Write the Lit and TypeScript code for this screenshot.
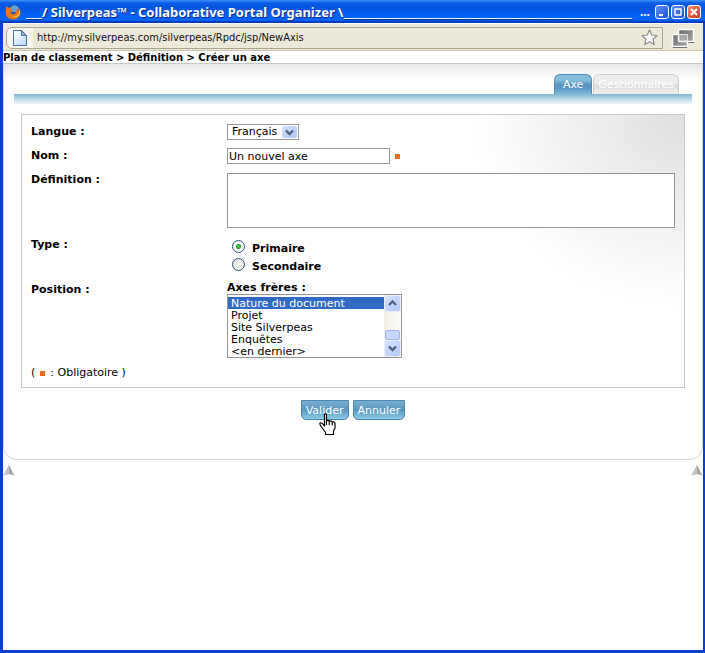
import { LitElement, html, css, svg } from "lit";
import { customElement, state } from "lit/decorators.js";

const chevronDown = svg`<path d="M1 1.5 L4.5 5 L8 1.5" fill="none" stroke="#4d6185" stroke-width="2.4"/>`;
const chevronUp = svg`<path d="M1 5 L4.5 1.5 L8 5" fill="none" stroke="#4d6185" stroke-width="2.4"/>`;

@customElement("title-bar")
class TitleBar extends LitElement {
  static styles = css`
    :host {
      display: flex;
      align-items: center;
      box-sizing: border-box;
      height: 23px;
      padding: 0 4px 0 5px;
      color: #fff;
      background: linear-gradient(#3b92fb 0, #0a5ce6 3px, #0254e0 8px, #0560f5 15px, #0466fc 20px, #0038b8 22px);
    }
    .title {
      flex: 1;
      min-width: 0;
      margin: 0 0 0 5px;
      overflow: hidden;
      white-space: nowrap;
      font: bold 13px/22px "Noto Sans", sans-serif;
      text-shadow: 1px 1px #0b2a86;
    }
    .dots {
      margin: 0 5px 0 4px;
      font: bold 12px/22px "Noto Sans", sans-serif;
    }
    .logo {
      flex: none;
    }
    .controls {
      display: flex;
      gap: 2px;
    }
    .control {
      display: grid;
      place-items: center;
      width: 14px;
      height: 14px;
      padding: 0;
      border: 1px solid #fff;
      border-radius: 3px;
      background: linear-gradient(135deg, #5c8df5, #1f50d8);
    }
    .close {
      background: linear-gradient(135deg, #f09070, #c83410);
    }
  `;

  render() {
    return html`
      <svg class="logo" width="16" height="16" viewBox="0 0 16 16" aria-hidden="true">
        <circle cx="8" cy="8" r="7" fill="#24549f" />
        <path d="M7 2 q4 -2 7 2 l-3 4 -4 0 -2 -3z" fill="#5fa4dc" />
        <path d="M1.5 2 L3.5 4 Q5 3 6.5 3.5 L5.5 5.5 L8 7 L5.5 8.5 Q6.5 11 9.5 10 Q12 8.5 11 5 Q13 6 13 8 Q14 6 13.3 3.3 Q16 6 15.5 9.5 Q14 15.5 8 15.5 Q2 15.3 0.7 9.5 Q0.3 5 1.5 2z" fill="#e8781c" />
        <path d="M13.8 5 Q15 8 13 10.8 Q10.5 13 7 12.2 Q12 15 14.5 11 Q16 8 13.8 5z" fill="#f9c347" />
      </svg>
      <h1 class="title">___/ Silverpeas™ - Collaborative Portal Organizer \\${"_".repeat(54)}</h1>
      <span class="dots">...</span>
      <div class="controls">
        <button class="control" aria-label="Réduire">
          <svg width="12" height="12"><path d="M3 9h4" stroke="#fff" stroke-width="2" /></svg>
        </button>
        <button class="control" aria-label="Agrandir">
          <svg width="12" height="12"><path d="M2.5 3h7M3 3v6M9 3v6M2.5 9h7" stroke="#fff" stroke-width="1.4" /></svg>
        </button>
        <button class="control close" aria-label="Fermer">
          <svg width="12" height="12"><path d="M3 3l6 6M9 3l-6 6" stroke="#fff" stroke-width="2" /></svg>
        </button>
      </div>
    `;
  }
}

@customElement("address-bar")
class AddressBar extends LitElement {
  static styles = css`
    :host {
      display: flex;
      align-items: center;
      gap: 8px;
      box-sizing: border-box;
      height: 28px;
      padding: 1px 8px 0 3px;
      background: #ece9d8;
      border-top: 1px solid #fff;
      border-bottom: 1px solid #c9c5b2;
    }
    .field {
      display: flex;
      flex: 1;
      align-items: center;
      box-sizing: border-box;
      height: 22px;
      padding-right: 4px;
      border: 1px solid #a7a491;
      border-radius: 6px 0 0 6px;
      overflow: hidden;
    }
    .page {
      display: grid;
      place-items: center;
      width: 26px;
      height: 20px;
      background: #f7f6f1;
    }
    .url {
      flex: 1;
      min-width: 0;
      height: 20px;
      padding: 0 0 0 4px;
      box-sizing: border-box;
      border: 0;
      outline: 0;
      background: none;
      color: #111;
      font: 11px/20px "DejaVu Sans Condensed", "DejaVu Sans", sans-serif;
    }
    .icon {
      flex: none;
    }
  `;

  render() {
    return html`
      <div class="field">
        <span class="page">
          <svg width="14" height="16" viewBox="0 0 14 16" aria-hidden="true">
            <defs>
              <linearGradient id="paper" x1="0" y1="0" x2="1" y2="1">
                <stop offset="0" stop-color="#fff" />
                <stop offset="1" stop-color="#b9d8fa" />
              </linearGradient>
            </defs>
            <path d="M.5 .5h8l5 5v10h-13z" fill="url(#paper)" stroke="#4d6fa6" />
            <path d="M8.5 .5v5h5z" fill="#86b6ee" stroke="#4d6fa6" />
          </svg>
        </span>
        <input class="url" aria-label="Adresse" value="http://my.silverpeas.com/silverpeas/Rpdc/jsp/NewAxis" />
        <svg class="icon" width="17" height="17" viewBox="0 0 17 17" aria-hidden="true">
          <path d="M8.5 1 L10.7 6 L16 6.5 L12 10.2 L13.2 15.6 L8.5 12.8 L3.8 15.6 L5 10.2 L1 6.5 L6.3 6z" fill="#fff" stroke="#8c8c8c" stroke-width="1.2" stroke-linejoin="round" />
        </svg>
      </div>
      <svg class="icon" width="24" height="20" viewBox="0 0 24 20" aria-hidden="true">
        <defs>
          <linearGradient id="pane" x1="0" y1="0" x2="1" y2="1">
            <stop offset="0" stop-color="#6c6c6c" />
            <stop offset="1" stop-color="#a8a8a8" />
          </linearGradient>
        </defs>
        <path d="M2 19.500h14" stroke="#444" />
        <path d="M16 14.500h7" stroke="#444" />
        <rect x="1.5" y="6.5" width="15" height="12" rx="1" fill="url(#pane)" stroke="#fff" stroke-width="1.5" />
        <rect x="7.5" y="1.5" width="15" height="12" rx="1" fill="url(#pane)" stroke="#fff" stroke-width="1.5" />
        <path d="M8 6.5h8.5v6.5h-8.5z" fill="#a9a9a9" stroke="#e4e4e4" />
      </svg>
    `;
  }
}

@customElement("app-root")
class AppRoot extends LitElement {
  static styles = css`
    :host {
      display: flex;
      flex-direction: column;
      box-sizing: border-box;
      min-height: 100vh;
      color: #000;
      background: #fff;
      border: solid #0a3fd0;
      border-width: 0 2px 3px 3px;
      font: 11px/14px "DejaVu Sans", sans-serif;
    }
    title-bar {
      margin: 0 -2px 0 -3px;
    }
    .crumbs {
      box-sizing: border-box;
      height: 13px;
      border-bottom: 1px solid #c8c8c8;
      font: bold 10px/14px "DejaVu Sans", sans-serif;
      white-space: nowrap;
    }
    .crumbs a {
      color: inherit;
      text-decoration: none;
    }
    .card {
      padding: 10px 10px 39px;
      border: solid #d9d9d9;
      border-width: 0 1px 1px;
      border-radius: 0 0 14px 14px;
      background: linear-gradient(#e6e6e6, #fff 14px);
    }
    .tabs {
      display: flex;
      justify-content: flex-end;
      gap: 1px;
      padding-right: 13px;
    }
    .tab {
      box-sizing: border-box;
      height: 20px;
      padding: 0 8px;
      border: 1px solid #5189b8;
      border-bottom: 0;
      border-radius: 6px 6px 0 0;
      background: linear-gradient(#86bdd9 0 5px, #7db4d4 6px, #5690c0 10px, #5f9bc6 14px, #7fbbd8);
      color: #fff;
      font: inherit;
      line-height: 20px;
    }
    .tab.idle {
      padding: 0 4px;
      border-color: #ccc;
      background: linear-gradient(#ececec 0 9px, #dadada 10px, #e8e8e8 15px, #ececec);
    }
    .band {
      height: 10px;
      background: linear-gradient(#7db4d0, #b9dcea 50%, #eef6fb);
    }
    .panel {
      display: grid;
      gap: 6px;
      margin: 10px 7px 12px;
      padding: 9px 9px 5px;
      border: 1px solid #c8c8c8;
      background: radial-gradient(ellipse 210px 190px at 100% 0, #e0e0e0, #efefef 50%, #fff) no-repeat;
    }
    .row {
      display: grid;
      grid-template-columns: 196px minmax(0, 1fr);
      align-items: start;
      min-height: 18px;
    }
    .name,
    .choice,
    .siblings-label {
      font-weight: bold;
    }
    .name {
      line-height: 16px;
    }
    .type {
      padding-top: 3px;
    }
    .field {
      display: flex;
      align-items: center;
      gap: 5px;
    }
    .dot {
      flex: none;
      width: 5px;
      height: 5px;
      margin-top: 1px;
      background: #ee6a1c;
    }
    .picker {
      display: inline-flex;
      align-items: center;
      box-sizing: border-box;
      width: 72px;
      height: 16px;
      border: 1px solid #949494;
      background: #fff;
    }
    .language {
      flex: 1;
      min-width: 0;
      margin: 0 -15px 0 0;
      height: 14px;
      padding: 0 0 0 4px;
      appearance: none;
      border: 0;
      outline: 0;
      background: none;
      color: #000;
      font: inherit;
      z-index: 1;
    }
    .arrow {
      display: grid;
      place-items: center;
      flex: none;
      box-sizing: border-box;
      width: 15px;
      height: 12px;
      margin-right: 1px;
      border-radius: 2px;
      background: linear-gradient(135deg, #d6e2fe, #adc4f8);
    }
    .text {
      box-sizing: border-box;
      width: 163px;
      height: 16px;
      padding: 0 1px;
      border: 1px solid #949494;
      outline: 0;
      background: #fff;
      color: #000;
      font: inherit;
    }
    .area {
      display: block;
      box-sizing: border-box;
      width: 100%;
      height: 55px;
      margin: 1px 0 0;
      border: 1px solid #949494;
      outline: 0;
      resize: none;
      background: #fff;
      font: inherit;
    }
    .choices {
      padding-top: 3px;
    }
    .choice {
      display: flex;
      gap: 7px;
      padding-left: 5px;
      line-height: 18px;
    }
    .radio {
      appearance: none;
      box-sizing: border-box;
      width: 13px;
      height: 13px;
      margin: 0;
      border: 1px solid #2d5279;
      border-radius: 50%;
      background: linear-gradient(135deg, #dcdcd6, #fff);
    }
    .radio:checked {
      background: radial-gradient(circle, #3fc03b 0 1px, #2a9d28 2px, #fff 3px, #f2f2ee);
    }
    .siblings-label {
      display: block;
      line-height: 12px;
    }
    .list {
      display: flex;
      box-sizing: border-box;
      width: 175px;
      height: 64px;
      border: 1px solid #949494;
      background: #fff;
    }
    .options {
      flex: 1;
      min-width: 0;
      height: 62px;
      padding: 2px 0 0;
      box-sizing: border-box;
      appearance: none;
      overflow: hidden;
      border: 0;
      border-radius: 0;
      outline: 0;
      background: #fff;
      font: 11px/12px "DejaVu Sans", sans-serif;
    }
    .options option {
      height: 12px;
      min-height: 12px;
      padding: 0 3px;
      color: #000;
      line-height: 12px;
    }
    .options option:checked {
      background: linear-gradient(#316ac5, #316ac5);
      color: #fff;
      outline: 1px dotted #fff;
      outline-offset: 0;
    }
    .scroll {
      display: flex;
      flex-direction: column;
      width: 17px;
      background: linear-gradient(90deg, #f0eee6, #fdfdfb);
    }
    .step {
      display: grid;
      place-items: center;
      box-sizing: border-box;
      height: 17px;
      border: 1px solid #e6eefc;
      border-radius: 3px;
      background: linear-gradient(135deg, #d6e2fe, #b4c9fa);
    }
    .thumb {
      box-sizing: border-box;
      height: 10px;
      margin: auto 1px 0;
      border: 1px solid #9db5ea;
      border-radius: 2px;
      background: #c6d6fd;
    }
    .note {
      display: flex;
      align-items: center;
      gap: 5px;
      margin: 0;
      line-height: 18px;
    }
    .actions {
      display: flex;
      justify-content: center;
      gap: 4px;
    }
    .action {
      position: relative;
      box-sizing: border-box;
      height: 20px;
      padding: 1px 4px 0;
      border: 1px solid #4c87b4;
      border-radius: 0 0 5px 5px;
      background: linear-gradient(#79aecd, #5a96c0 9px, #69a9cd 12px, #8dcae2);
      color: #fff;
      font: inherit;
    }
    .hand {
      position: absolute;
      left: 17px;
      top: 12px;
      z-index: 2;
    }
    .tops {
      display: flex;
      justify-content: space-between;
      padding-top: 5px;
    }
    .top {
      display: block;
      height: 12px;
      line-height: 0;
    }
  `;

  @state() private kind = "Primaire";

  private upArrow() {
    return html`<a class="top" href="#top" aria-label="Haut de page">
      <svg width="12" height="12" viewBox="0 0 12 12" aria-hidden="true">
        <path d="M6 0 L11.5 10.5 Q6 8 .5 10.5z" fill="#a4a4a4" />
        <path d="M6 0 L.5 10.5 Q3 8.8 6 8.8z" fill="#c4c4c4" />
      </svg>
    </a>`;
  }

  render() {
    const siblings = ["Nature du document", "Projet", "Site Silverpeas", "Enquêtes", "<en dernier>"];
    return html`
      <title-bar></title-bar>
      <address-bar></address-bar>
      <nav class="crumbs" id="top">
        <a href="#plan">Plan de classement</a> &gt; <a href="#definition">Définition</a> &gt; Créer un axe
      </nav>
      <main class="card">
        <div class="tabs" role="tablist">
          <button class="tab" role="tab" aria-selected="true">Axe</button>
          <button class="tab idle" role="tab" aria-selected="false">Gestionnaires</button>
        </div>
        <div class="band"></div>
        <form @submit=${(e: Event) => e.preventDefault()}>
          <div class="panel">
            <div class="row">
              <label class="name" for="language">Langue :</label>
              <div class="field">
                <span class="picker">
                  <select class="language" id="language"><option>Français</option></select>
                  <span class="arrow"><svg width="9" height="7">${chevronDown}</svg></span>
                </span>
              </div>
            </div>
            <div class="row">
              <label class="name" for="axis">Nom :</label>
              <div class="field">
                <input class="text" id="axis" value="Un nouvel axe" required />
                <span class="dot"></span>
              </div>
            </div>
            <div class="row">
              <label class="name" for="text">Définition :</label>
              <textarea class="area" id="text"></textarea>
            </div>
            <div class="row type" role="radiogroup" aria-labelledby="type">
              <span class="name" id="type">Type :</span>
              <div class="choices">
                ${["Primaire", "Secondaire"].map(
                  (k) => html`<label class="choice">
                    <input class="radio" type="radio" name="kind" .checked=${this.kind === k} @change=${() => (this.kind = k)} />${k}
                  </label>`
                )}
              </div>
            </div>
            <div class="row">
              <span class="name">Position :</span>
              <div>
                <label class="siblings-label" for="siblings">Axes frères :</label>
                <div class="list">
                  <select class="options" id="siblings" size="5">
                    ${siblings.map((s, i) => html`<option ?selected=${i === 0}>${s}</option>`)}
                  </select>
                  <div class="scroll" aria-hidden="true">
                    <span class="step"><svg width="9" height="7">${chevronUp}</svg></span>
                    <span class="thumb"></span>
                    <span class="step"><svg width="9" height="7">${chevronDown}</svg></span>
                  </div>
                </div>
              </div>
            </div>
            <p class="note"><span>(</span><span class="dot"></span><span>: Obligatoire )</span></p>
          </div>
          <div class="actions">
            <button class="action" type="submit">
              Valider
              <svg class="hand" width="18" height="23" viewBox="0 0 18 23" aria-hidden="true">
                <path d="M5.5 1.5 Q6.5 .3 7.5 1.5 V8 Q9 6.5 10.3 8.3 Q12 7 13.2 9 Q15.5 8.3 16 10.5 V15 L14.5 18 V21.5 H6.5 V19.5 L2.5 14 Q.3 11 1 10 Q2.5 9.3 4 11.2 L5.5 13z" fill="#fff" stroke="#000" stroke-width="1.2" stroke-linejoin="round" />
                <path d="M7.5 8v4M10.3 8.3v4M13.2 9v3.5" stroke="#000" stroke-width="1.1" fill="none" />
              </svg>
            </button>
            <button class="action" type="button">Annuler</button>
          </div>
        </form>
      </main>
      <div class="tops">${this.upArrow()}${this.upArrow()}</div>
    `;
  }
}
